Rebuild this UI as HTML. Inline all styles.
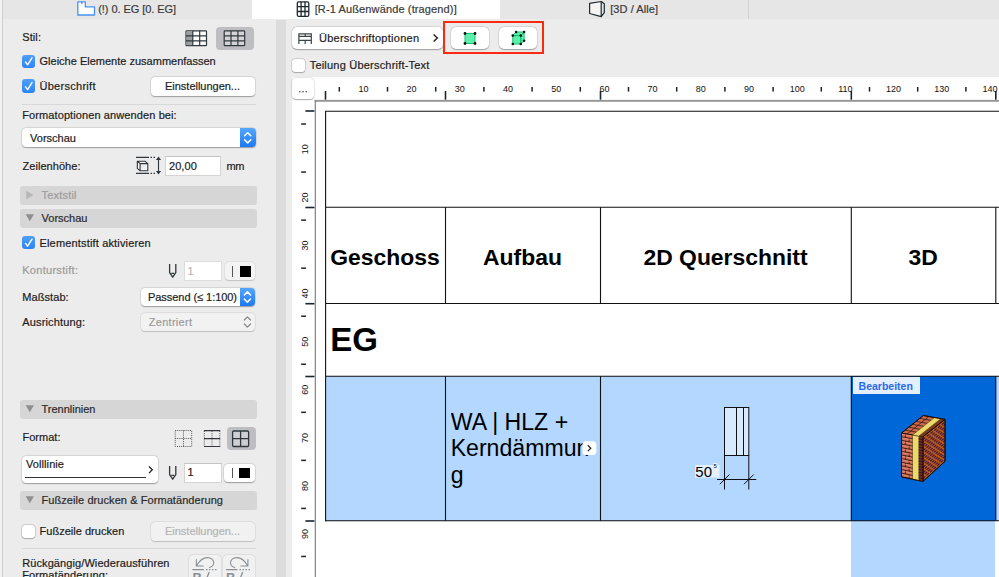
<!DOCTYPE html>
<html lang="de"><head><meta charset="utf-8"><title>Schedule</title>
<style>
html,body{margin:0;padding:0}
body{width:999px;height:577px;overflow:hidden;position:relative;background:#ececec;font-family:"Liberation Sans",sans-serif;font-size:11px;color:#1c1c1c}
.a{position:absolute}
.t{position:absolute;white-space:pre;line-height:14px;height:14px;-webkit-text-stroke:.2px}
.btn{position:absolute;background:#fff;border-radius:4px;box-shadow:0 0 0 .5px rgba(0,0,0,.10),0 .5px 1.2px rgba(0,0,0,.30);box-sizing:border-box}
.inp{position:absolute;background:#fff;border:1px solid #d4d4d4;border-top-color:#c4c4c4;box-sizing:border-box}
.bar{position:absolute;left:20px;width:237px;height:18.8px;background:#d6d6d6;border-radius:3px}
.cb{position:absolute;width:13.2px;height:13.2px;border-radius:3px;background:linear-gradient(#4f9ff9,#2d84f5)}
.cb0{position:absolute;width:13px;height:13px;border-radius:3px;background:#fff;box-shadow:0 0 0 .5px rgba(0,0,0,.22),0 .5px 1px rgba(0,0,0,.2)}
.th{position:absolute;white-space:nowrap;text-align:center;font-weight:bold;font-size:22.9px;line-height:28px;height:28px;color:#000;top:242.8px}
</style></head><body>

<!-- tab bar -->
<div class="a" style="left:0;top:0;width:999px;height:19px;background:#e6e6e6"></div>
<div class="a" style="left:251.7px;top:0;width:248.8px;height:19px;background:#fff"></div>
<div class="a" style="left:748px;top:0;width:1px;height:19px;background:#d2d2d2"></div>
<!-- left edge -->
<div class="a" style="left:0;top:0;width:2px;height:577px;background:#f2f2f2"></div>
<div class="a" style="left:1.5px;top:0;width:1.5px;height:577px;background:#d0d0d0"></div>
<!-- divider -->
<div class="a" style="left:276px;top:19.5px;width:10px;height:558px;background:#dcdcdc"></div>

<!-- LEFT PANEL shapes -->
<div class="a" style="left:215.5px;top:27px;width:38px;height:22.5px;background:#bebec2;border-radius:4px"></div>
<div class="cb" style="left:22.2px;top:54.6px"></div>
<div class="cb" style="left:22.2px;top:79.4px"></div>
<div class="btn" style="left:151px;top:77px;width:104px;height:19px"></div>
<div class="a" style="left:22px;top:104px;width:234px;height:1px;background:#d8d8d8"></div>
<div class="btn" style="left:22px;top:128.3px;width:234px;height:18.7px"></div>
<div class="a" style="left:239.5px;top:128.3px;width:16.5px;height:18.7px;border-radius:0 4px 4px 0;background:linear-gradient(#56a8fb,#1a78f3)"></div>
<div class="inp" style="left:165px;top:155.5px;width:56px;height:20.5px"></div>

<div class="bar" style="top:186px"></div>
<div class="bar" style="top:209px"></div>
<div class="cb" style="left:22.2px;top:236px"></div>
<div class="inp" style="left:184px;top:260.5px;width:37.5px;height:20.5px;border-color:#dcdcdc"></div>
<div class="btn" style="left:224.500px;top:262px;width:30.500px;height:18px;background:#f3f3f3;box-shadow:0 0 0 .5px rgba(0,0,0,.08),0 .5px 1px rgba(0,0,0,.14)"></div>
<div class="a" style="left:232px;top:266px;width:1.2px;height:10.5px;background:#555"></div>
<div class="a" style="left:240px;top:266px;width:11px;height:11px;background:#000"></div>
<div class="btn" style="left:140.5px;top:287.5px;width:114.5px;height:18.5px"></div>
<div class="a" style="left:239.5px;top:287.5px;width:15.5px;height:18.5px;border-radius:0 4px 4px 0;background:linear-gradient(#56a8fb,#1a78f3)"></div>
<div class="btn" style="left:140.5px;top:312.5px;width:114.5px;height:18.5px;background:#f2f2f2;box-shadow:0 0 0 .5px rgba(0,0,0,.08),0 .5px 1px rgba(0,0,0,.16)"></div>

<div class="bar" style="top:400px"></div>
<div class="a" style="left:227px;top:427px;width:28.5px;height:23px;background:#bebec2;border-radius:4px"></div>
<div class="btn" style="left:22px;top:455.5px;width:135.5px;height:27.5px"></div>
<div class="a" style="left:25px;top:477px;width:121px;height:1.2px;background:#333"></div>
<div class="inp" style="left:184px;top:462.5px;width:37.5px;height:20.3px"></div>
<div class="btn" style="left:223.5px;top:463.7px;width:31px;height:18px"></div>
<div class="a" style="left:232px;top:467.6px;width:1.2px;height:10.5px;background:#555"></div>
<div class="a" style="left:239.2px;top:467.6px;width:11px;height:10.6px;background:#000"></div>
<div class="bar" style="top:491px"></div>
<div class="cb0" style="left:22.3px;top:524.6px"></div>
<div class="btn" style="left:151px;top:522.3px;width:104px;height:18.7px;background:#f1f1f1;box-shadow:0 0 0 .5px rgba(0,0,0,.08),0 .5px 1px rgba(0,0,0,.16)"></div>
<div class="a" style="left:22px;top:548px;width:234px;height:1px;background:#d8d8d8"></div>
<div class="btn" style="left:189px;top:555px;width:32px;height:30px;background:#f1f1f1;box-shadow:0 0 0 .5px rgba(0,0,0,.08),0 .5px 1px rgba(0,0,0,.16)"></div>
<div class="btn" style="left:223px;top:555px;width:31.5px;height:30px;background:#f1f1f1;box-shadow:0 0 0 .5px rgba(0,0,0,.08),0 .5px 1px rgba(0,0,0,.16)"></div>

<!-- RIGHT PANEL shapes -->
<div class="btn" style="left:292px;top:27px;width:150.5px;height:22.3px;border-radius:5px"></div>
<div class="a" style="left:442.8px;top:21.3px;width:101.2px;height:33px;border:2.1px solid #fb2a10;box-sizing:border-box"></div>
<div class="btn" style="left:450.6px;top:26.8px;width:38px;height:22.3px;border-radius:5px"></div>
<div class="btn" style="left:498.5px;top:26.8px;width:38px;height:22.3px;border-radius:5px"></div>
<div class="cb0" style="left:292.3px;top:58.5px"></div>

<!-- rulers bg -->
<div class="a" style="left:292px;top:77px;width:707px;height:23.5px;background:#fff"></div>
<div class="a" style="left:292px;top:100px;width:23.5px;height:477px;background:#fff"></div>
<div class="btn" style="left:292px;top:77.700px;width:22.100px;height:21.800px;border-radius:4px"></div>
<!-- sheet -->
<div class="a" style="left:314.700px;top:99.900px;width:685px;height:477px;background:#fff;"></div>
<svg class="a" style="left:0;top:0" width="999" height="577" viewBox="0 0 999 577"><rect x="314.700" y="99.900" width="685" height="1.900" fill="#979797"/><rect x="314.700" y="99.900" width="1.300" height="478" fill="#8a8a8a"/></svg>

<!-- table fills -->
<div class="a" style="left:325.500px;top:376.300px;width:674px;height:144.500px;background:#b3d7ff"></div>
<div class="a" style="left:851px;top:376.300px;width:144.800px;height:144.500px;background:#0067d9"></div>
<div class="a" style="left:850.800px;top:520.800px;width:144.600px;height:57px;background:#b3d7ff"></div>

<svg class="a" style="left:0;top:0" width="999" height="577" viewBox="0 0 999 577">
<g fill="#1a252d">
<rect x="338.55" y="87" width="1.5" height="4.6"/>
<rect x="386.75" y="87" width="1.5" height="4.6"/>
<rect x="434.95" y="87" width="1.5" height="4.6"/>
<rect x="483.15" y="87" width="1.5" height="4.6"/>
<rect x="531.35" y="87" width="1.5" height="4.6"/>
<rect x="579.55" y="87" width="1.5" height="4.6"/>
<rect x="627.75" y="87" width="1.5" height="4.6"/>
<rect x="675.95" y="87" width="1.5" height="4.6"/>
<rect x="724.15" y="87" width="1.5" height="4.6"/>
<rect x="772.35" y="87" width="1.5" height="4.6"/>
<rect x="820.55" y="87" width="1.5" height="4.6"/>
<rect x="868.75" y="87" width="1.5" height="4.6"/>
<rect x="916.95" y="87" width="1.5" height="4.6"/>
<rect x="965.15" y="87" width="1.5" height="4.6"/>
<rect x="1013.35" y="87" width="1.5" height="4.6"/>
<rect x="324.70" y="91" width="1.6" height="8.7"/>
<rect x="444.70" y="91" width="1.6" height="8.7"/>
<rect x="599.70" y="91" width="1.6" height="8.7"/>
<rect x="850.50" y="91" width="1.6" height="8.7"/>
<rect x="995.00" y="91" width="1.6" height="8.7"/>
<rect x="301.2" y="123.28" width="4.8" height="1.5"/>
<rect x="301.2" y="171.32" width="4.8" height="1.5"/>
<rect x="301.2" y="219.38" width="4.8" height="1.5"/>
<rect x="301.2" y="267.42" width="4.8" height="1.5"/>
<rect x="301.2" y="315.48" width="4.8" height="1.5"/>
<rect x="301.2" y="363.52" width="4.8" height="1.5"/>
<rect x="301.2" y="411.57" width="4.8" height="1.5"/>
<rect x="301.2" y="459.62" width="4.8" height="1.5"/>
<rect x="301.2" y="507.67" width="4.8" height="1.5"/>
<rect x="301.2" y="555.72" width="4.8" height="1.5"/>
<rect x="301.2" y="603.77" width="4.8" height="1.5"/>
<rect x="305.4" y="110.20" width="9" height="1.6"/>
<rect x="305.4" y="206.70" width="9" height="1.6"/>
<rect x="305.4" y="302.90" width="9" height="1.6"/>
<rect x="305.4" y="375.70" width="9" height="1.6"/>
<rect x="305.4" y="520.20" width="9" height="1.6"/>
</g>
<g font-family="Liberation Sans, sans-serif" font-size="9" fill="#111" text-anchor="middle">
<text x="363.40" y="92.2">10</text>
<text x="411.60" y="92.2">20</text>
<text x="459.80" y="92.2">30</text>
<text x="508.00" y="92.2">40</text>
<text x="556.20" y="92.2">50</text>
<text x="604.40" y="92.2">60</text>
<text x="652.60" y="92.2">70</text>
<text x="700.80" y="92.2">80</text>
<text x="749.00" y="92.2">90</text>
<text x="797.20" y="92.2">100</text>
<text x="845.40" y="92.2">110</text>
<text x="893.60" y="92.2">120</text>
<text x="941.80" y="92.2">130</text>
<text x="990.00" y="92.2">140</text>
<text transform="translate(307.5 149.30) rotate(-90)">10</text>
<text transform="translate(307.5 197.40) rotate(-90)">20</text>
<text transform="translate(307.5 245.50) rotate(-90)">30</text>
<text transform="translate(307.5 293.60) rotate(-90)">40</text>
<text transform="translate(307.5 341.70) rotate(-90)">50</text>
<text transform="translate(307.5 389.80) rotate(-90)">60</text>
<text transform="translate(307.5 437.90) rotate(-90)">70</text>
<text transform="translate(307.5 486.00) rotate(-90)">80</text>
<text transform="translate(307.5 534.10) rotate(-90)">90</text>
</g></svg>

<svg class="a" style="left:0;top:0" width="999" height="577" viewBox="0 0 999 577">
<g stroke="#111" stroke-width="1.1" fill="none">
<path d="M325.600 111.300H999M325.600 207.200H999M325.600 303.500H999M325.600 376.300H999M325.600 520.800H999M325.600 110.700V521.400"/>
<path d="M445.500 207.200V303.500M600.500 207.200V303.500M851.300 207.200V303.500M995.800 207.200V303.500"/>
<path d="M445.500 376.300V520.800M600.500 376.300V520.800M851.300 376.300V520.800M995.800 376.300V520.800"/>
</g>
<!-- ICONS -->
<!-- checkmarks -->
<g fill="none" stroke="#fff" stroke-width="1.4" stroke-linecap="round" stroke-linejoin="round">
<path d="M25.5 62l2.1 2.8 4.4-7"/>
<path d="M25.5 86.8l2.1 2.8 4.4-7"/>
<path d="M25.5 243.4l2.1 2.8 4.4-7"/>
</g>
<!-- select chevrons -->
<g fill="none" stroke="#fff" stroke-width="1.5" stroke-linecap="round" stroke-linejoin="round">
<path d="M244.6 135.8l3.1-3.1 3.1 3.1M244.6 139.8l3.1 3.1 3.1-3.1"/>
<path d="M244.3 295l3.1-3.1 3.1 3.1M244.3 299l3.1 3.1 3.1-3.1"/>
</g>
<path d="M244.3 320l3.1-3.1 3.1 3.1M244.3 324l3.1 3.1 3.1-3.1" fill="none" stroke="#8a8a8a" stroke-width="1.3" stroke-linecap="round" stroke-linejoin="round"/>
<!-- disclosure triangles -->
<path d="M26.3 190.7v8.6l7-4.3z" fill="#b6b6b6"/>
<path d="M25.7 214.3h8.2l-4.1 7z" fill="#8e8e8e"/>
<path d="M25.7 405.3h8.2l-4.1 7z" fill="#8e8e8e"/>
<path d="M25.7 496.3h8.2l-4.1 7z" fill="#8e8e8e"/>
<!-- chevrons > -->
<path d="M433.6 34.6l3.8 3.5-3.8 3.5" fill="none" stroke="#222" stroke-width="1.4"/>
<path d="M149 466.500l3.300 3.300-3.300 3.300" fill="none" stroke="#222" stroke-width="1.3"/>
<!-- style icons -->
<g>
<rect x="186" y="30.900" width="20.500" height="14.800" rx="0.800" fill="#fff" stroke="#30383d" stroke-width="1.2"/>
<rect x="186.6" y="31.4" width="6.2" height="13.8" fill="#9a9ea0"/>
<path d="M192.8 30.8v15M199.7 30.8v15M186 35.8h20.5M186 40.8h20.5" stroke="#30383d" stroke-width="1.2" fill="none"/>
<rect x="224.200" y="30.900" width="20.500" height="14.800" rx="0.800" fill="#d4d4d6" stroke="#30383d" stroke-width="1.2"/>
<path d="M231 30.8v15M237.9 30.8v15M224.2 35.8h20.5M224.2 40.8h20.5" stroke="#30383d" stroke-width="1.2" fill="none"/>
</g>
<!-- row height icon -->
<g fill="none" stroke="#30383d" stroke-width="1.1">
<path d="M136 157.4h13M136 173.4h13"/>
<path d="M150.5 157.4h5M150.5 173.4h5" stroke-dasharray="1.5 1.5"/>
<path d="M158.5 158.5v14"/>
<path d="M137.3 161.2l2.8 2.4v7.2l-2.8-2.4zM137.3 161.2h7.6l2.9 2.4h-7.7M147.8 163.6v7.2h-7.7" stroke-linejoin="round" fill="#f4f4f4"/>
</g>
<path d="M158.5 156.6l2.6 3.4h-5.2zM158.5 174.4l2.6-3.4h-5.2z" fill="#30383d"/>
<!-- pens -->
<g fill="none" stroke="#30383d" stroke-width="1.300" stroke-linejoin="round">
<path d="M169.6 264v8.6l3.1 4.6 3.1-4.6V264M171.3 273.3h2.8"/>
<path d="M169.6 466v8.6l3.1 4.6 3.1-4.6V466M171.3 475.3h2.8"/>
</g>
<!-- separator icons -->
<g fill="none" stroke="#555" stroke-width="1" stroke-dasharray="1 1.1">
<path d="M175.2 430.5h16.5v16h-16.5zM183.5 430.5v16M175.2 438.5h16.5"/>
<path d="M204.3 431v15.5M212 431v15.5M219.8 431v15.5"/>
</g>
<path d="M204 430.7h16.2M204 438.6h16.2M204 446.5h16.2" stroke="#30383d" stroke-width="1.2" fill="none"/>
<rect x="232.6" y="431" width="16" height="15.5" rx="1.2" fill="#cfcfd2" stroke="#30383d" stroke-width="1.3"/>
<path d="M240.6 431v15.5M232.6 438.7h16" stroke="#30383d" stroke-width="1.3" fill="none"/>
<!-- undo/redo -->
<g fill="none" stroke="#8a9095" stroke-width="1.1" stroke-linecap="round" stroke-linejoin="round">
<path d="M196.6 565.8c2.5-4.5 7-9 12.500-8 5.500 1.500 6.500 7.500 0.500 9.800M196.300 559.500v6.500h7"/>
<path d="M247.600 565.800c-2.500-4.500-7-9-12.500-8-5.500 1.500-6.500 7.500-0.500 9.800M247.900 559.500v6.500h-7"/>
<path d="M192.400 569.700h11.500M226 569.700h11.500" stroke-width="1.300" stroke-linecap="butt"/>
<path d="M206 569.700h11M239.500 569.700h11" stroke-width="1.300" stroke-dasharray="1.500 1.500" stroke-linecap="butt"/>
</g>
<g font-family="Liberation Sans, sans-serif" font-weight="bold" font-size="13" fill="#8a9095">
<text x="192.500" y="581.500">B</text><text x="226" y="581.500">B</text>
</g>
<path d="M205.500 581.500l3.700-9.500M239 581.500l3.700-9.500" stroke="#8a9095" stroke-width="1.300" fill="none"/>
<!-- tab icons -->
<path d="M77.800 1.800h7.500v5h9.200v8.200h-16.700z" fill="#fff" stroke="#4a90f5" stroke-width="1.300" stroke-linejoin="round"/>
<path d="M81.800 1.800v2.500" stroke="#4a90f5" stroke-width="1.200" fill="none"/>
<rect x="297.300" y="1.800" width="11.500" height="14.600" rx="1.500" fill="#fff" stroke="#1e2a33" stroke-width="1.300"/>
<path d="M301.100 1.800v14.600M305 1.800v14.600M297.300 6.700h11.500M297.300 11.500h11.500" stroke="#1e2a33" stroke-width="1.300" fill="none"/>
<path d="M589.600 3.300l11.600-1.800v15.200l-11.600-3.200z" fill="#f4f4f4" stroke="#1e2a33" stroke-width="1.200" stroke-linejoin="round"/><path d="M601.200 1.500l3.100 2.200v8.900l-3.100 4.100" fill="none" stroke="#1e2a33" stroke-width="1.200" stroke-linejoin="round"/>
<!-- header options icon -->
<path d="M298.900 43.900V33.800H311.300V43.900M298.900 36.300H311.300M298.900 40.400H311.300M305.200 33.800V36.300M305.200 40.400V43.900" fill="none" stroke="#3a4449" stroke-width="1.200"/>
<!-- green icons -->
<rect x="465" y="33.500" width="10" height="10" fill="#5cefae" stroke="#19c06c" stroke-width="1"/>
<g fill="#111"><circle cx="465" cy="33.500" r="1.400"/><circle cx="475" cy="33.500" r="1.400"/><circle cx="465" cy="43.500" r="1.400"/><circle cx="475" cy="43.500" r="1.400"/></g>
<g fill="#5cefae" stroke="#19c06c" stroke-width="1" stroke-linejoin="round">
<path d="M512.800 35.600l3.300-3.600h8l-3.300 3.600zM520.800 35.600l3.300-3.600v8.800l-3.300 3.200zM512.800 35.600h8v8.400h-8z"/>
</g>
<g fill="#111"><circle cx="512.800" cy="35.600" r="1.300"/><circle cx="520.800" cy="35.600" r="1.300"/><circle cx="512.800" cy="44" r="1.300"/><circle cx="520.800" cy="44" r="1.300"/><circle cx="516.100" cy="32" r="1.300"/><circle cx="524.100" cy="32" r="1.300"/><circle cx="524.100" cy="40.800" r="1.300"/></g>
<!-- ... -->
<g fill="#333"><circle cx="299.800" cy="91.800" r="0.750"/><circle cx="303" cy="91.800" r="0.750"/><circle cx="306.200" cy="91.800" r="0.750"/></g>

<!-- section drawing -->
<rect x="724.500" y="407.500" width="24.300" height="48" fill="#d8eaff" stroke="#111" stroke-width="1"/>
<path d="M736.500 407.500v48M743.500 407.500v48" stroke="#111" stroke-width="1" fill="none"/>
<path d="M724.500 455.500v34M748.800 455.500v34M717 479.500h39.300M719.800 484.200l9.600-9.600M744 484.200l9.600-9.600" stroke="#111" stroke-width="1" fill="none"/>
<rect x="695" y="465" width="24.500" height="12.500" fill="#e6f1ff"/>
<text x="695.300" y="477" font-family="Liberation Sans, sans-serif" font-size="15" fill="#000">50</text>
<rect x="713" y="463" width="4.500" height="5" fill="#e6f1ff"/><text x="713.500" y="468" font-family="Liberation Sans, sans-serif" font-size="6" fill="#000">5</text>


<!-- brick wall -->
<g stroke-linejoin="round">
<path d="M901.5 433.1L923.3 415.5L945.0 419.4L922.9 436.8z" fill="#c96a4c" stroke="#1a0d08" stroke-width="0.9"/>
<path d="M918.8 436.1L940.8 418.7L945.0 419.4L922.9 436.8z" fill="#7a3a1c"/>
<path d="M922.9 436.8L945.0 419.4L945.0 461.3L922.9 481.4z" fill="#bb5c1a" stroke="#1a0d08" stroke-width="0.9"/>
<path d="M901.5 433.1L922.9 436.8L922.9 481.4L901.5 476.9z" fill="#cf6e54" stroke="#1a0d08" stroke-width="0.9"/>
<path d="M918.8 436.1L922.9 436.8L922.9 481.4L918.8 480.5z" fill="#6e3420"/>
<path d="M912.5 435.0L918.8 436.1L918.8 480.5L912.5 479.2z" fill="#ecd96c" stroke="#3a3010" stroke-width="0.5"/>
<path d="M912.5 435.0L934.5 417.5L940.8 418.7L918.8 436.1z" fill="#ecd96c" stroke="#3a3010" stroke-width="0.5"/>
<path d="M901.5 436.8L912.5 438.7M901.5 440.4L912.5 442.4M901.5 444.1L912.5 446.1M901.5 447.7L912.5 449.7M901.5 451.4L912.5 453.4M901.5 455.0L912.5 457.1M901.5 458.6L912.5 460.8M901.5 462.3L912.5 464.5M901.5 465.9L912.5 468.2M901.5 469.6L912.5 471.8M901.5 473.2L912.5 475.5M905.4 433.8L905.4 437.4M909.2 438.1L909.2 441.8M905.4 441.1L905.4 444.8M909.2 445.5L909.2 449.1M905.4 448.4L905.4 452.1M909.2 452.8L909.2 456.5M905.4 455.7L905.4 459.4M909.2 460.1L909.2 463.8M905.4 463.1L905.4 466.7M909.2 467.5L909.2 471.2M905.4 470.4L905.4 474.0M909.2 474.8L909.2 478.5" stroke="#2a0f08" stroke-width="0.8" fill="none"/>
<path d="M902.6 434.6L911.4 436.1M902.6 438.2L911.4 439.8M902.6 441.9L911.4 443.5M902.6 445.5L911.4 447.1M902.6 449.2L911.4 450.8M902.6 452.8L911.4 454.5M902.6 456.5L911.4 458.2M902.6 460.1L911.4 461.9M902.6 463.8L911.4 465.5M902.6 467.4L911.4 469.2M902.6 471.1L911.4 472.9M902.6 474.8L911.4 476.6" stroke="#e89a84" stroke-width="0.6" fill="none"/>
<path d="M905.1 430.2L916.2 432.1M908.8 427.2L919.8 429.2M912.4 424.3L923.5 426.3M916.0 421.4L927.1 423.3M919.7 418.4L930.8 420.4M907.0 434.1L928.9 416.5" stroke="#2a0f08" stroke-width="0.7" fill="none"/>
<g stroke="#47183c" stroke-width="1.25" fill="none" stroke-dasharray="3.3 1.5"><path d="M922.9 439.6L945.0 422.0" stroke-dashoffset="0"/><path d="M922.9 442.4L945.0 424.6" stroke-dashoffset="2.4"/><path d="M922.9 445.2L945.0 427.3" stroke-dashoffset="0"/><path d="M922.9 447.9L945.0 429.9" stroke-dashoffset="2.4"/><path d="M922.9 450.7L945.0 432.5" stroke-dashoffset="0"/><path d="M922.9 453.5L945.0 435.1" stroke-dashoffset="2.4"/><path d="M922.9 456.3L945.0 437.7" stroke-dashoffset="0"/><path d="M922.9 459.1L945.0 440.4" stroke-dashoffset="2.4"/><path d="M922.9 461.9L945.0 443.0" stroke-dashoffset="0"/><path d="M922.9 464.7L945.0 445.6" stroke-dashoffset="2.4"/><path d="M922.9 467.5L945.0 448.2" stroke-dashoffset="0"/><path d="M922.9 470.2L945.0 450.8" stroke-dashoffset="2.4"/><path d="M922.9 473.0L945.0 453.4" stroke-dashoffset="0"/><path d="M922.9 475.8L945.0 456.1" stroke-dashoffset="2.4"/><path d="M922.9 478.6L945.0 458.7" stroke-dashoffset="0"/></g>
<path d="M918.8 438.9L922.9 439.6M918.8 441.6L922.9 442.4M918.8 444.4L922.9 445.2M918.8 447.2L922.9 447.9M918.8 450.0L922.9 450.7M918.8 452.8L922.9 453.5M918.8 455.5L922.9 456.3M918.8 458.3L922.9 459.1M918.8 461.1L922.9 461.9M918.8 463.9L922.9 464.7M918.8 466.6L922.9 467.5M918.8 469.4L922.9 470.2M918.8 472.2L922.9 473.0M918.8 475.0L922.9 475.8M918.8 477.8L922.9 478.6" stroke="#3a1230" stroke-width="1.1" fill="none"/>
<path d="M901.5 433.1L923.3 415.5L945.0 419.4L945.0 461.3L922.9 481.4L901.5 476.9z" fill="none" stroke="#140a06" stroke-width="0.9"/>
<path d="M922.9 436.8L922.9 481.4M922.9 436.8L945 419.4" fill="none" stroke="#140a06" stroke-width="0.8"/>
</g>
</svg>

<span class="th" style="left:325px;width:120px">Geschoss</span>
<span class="th" style="left:445px;width:155px">Aufbau</span>
<span class="th" style="left:600px;width:251px">2D Querschnitt</span>
<span class="th" style="left:851px;width:144.500px">3D</span>
<span class="t" style="left:330.200px;top:320.200px;-webkit-text-stroke:0;font-size:33px;font-weight:bold;line-height:40px;height:40px;color:#000">EG</span>
<div class="a" style="left:450.7px;top:408.5px;width:140px;font-size:23.1px;line-height:26.7px;color:#000;white-space:nowrap;overflow:hidden">WA | HLZ +<br>Kerndämmun<br>g</div>
<svg class="a" style="left:582px;top:441px" width="15" height="15" viewBox="582 441 15 15"><rect x="582.500" y="441.300" width="13.800" height="13.800" rx="3.500" fill="#fff"/><path d="M587.800 445.300l3 2.900-3 2.900" fill="none" stroke="#222" stroke-width="1.200"/></svg>
<div class="a" style="left:852.500px;top:377.300px;width:67.700px;height:16.500px;background:#e3eeff"></div>
<span class="t" style="left:858.600px;top:379px;font-weight:bold;font-size:10.500px;-webkit-text-stroke:0;color:#2a6ae8">Bearbeiten</span>

<span class="t" style="left:98.20px;top:1.79px;color:#3a3a3a;letter-spacing:-0.054px;">(!) 0. EG [0. EG]</span>
<span class="t" style="left:314.70px;top:1.79px;color:#3a3a3a;letter-spacing:0.128px;">[R-1 Außenwände (tragend)]</span>
<span class="t" style="left:610.20px;top:1.79px;color:#3a3a3a;letter-spacing:0.072px;">[3D / Alle]</span>
<span class="t" style="left:22.20px;top:30.19px;color:#1c1c1c;letter-spacing:0.102px;">Stil:</span>
<span class="t" style="left:39.50px;top:54.19px;color:#1c1c1c;letter-spacing:0.005px;">Gleiche Elemente zusammenfassen</span>
<span class="t" style="left:39.50px;top:79.19px;color:#1c1c1c;letter-spacing:0.281px;">Überschrift</span>
<span class="t" style="left:165.00px;top:79.19px;color:#1c1c1c;letter-spacing:-0.015px;">Einstellungen...</span>
<span class="t" style="left:22.20px;top:108.19px;color:#1c1c1c;letter-spacing:0.105px;">Formatoptionen anwenden bei:</span>
<span class="t" style="left:30.00px;top:131.19px;color:#1c1c1c;letter-spacing:0.018px;">Vorschau</span>
<span class="t" style="left:22.50px;top:158.69px;color:#1c1c1c;letter-spacing:0.050px;">Zeilenhöhe:</span>
<span class="t" style="left:169.00px;top:158.69px;color:#1c1c1c;letter-spacing:0.055px;">20,00</span>
<span class="t" style="left:226.50px;top:158.69px;color:#1c1c1c;letter-spacing:-0.328px;">mm</span>
<span class="t" style="left:41.50px;top:188.19px;color:#9c9c9c;letter-spacing:0.196px;">Textstil</span>
<span class="t" style="left:41.50px;top:211.19px;color:#2a2a2a;letter-spacing:0.018px;">Vorschau</span>
<span class="t" style="left:39.50px;top:235.94px;color:#1c1c1c;letter-spacing:0.165px;">Elementstift aktivieren</span>
<span class="t" style="left:22.20px;top:263.49px;color:#9a9a9a;letter-spacing:0.293px;">Konturstift:</span>
<span class="t" style="left:187.60px;top:263.69px;color:#b8b8b8;letter-spacing:0.000px;">1</span>
<span class="t" style="left:22.20px;top:290.19px;color:#1c1c1c;letter-spacing:0.092px;">Maßstab:</span>
<span class="t" style="left:148.00px;top:289.89px;color:#1c1c1c;letter-spacing:-0.051px;">Passend (≤ 1:100)</span>
<span class="t" style="left:22.20px;top:315.19px;color:#1c1c1c;letter-spacing:0.168px;">Ausrichtung:</span>
<span class="t" style="left:148.75px;top:314.89px;color:#9c9c9c;letter-spacing:0.285px;">Zentriert</span>
<span class="t" style="left:41.50px;top:402.44px;color:#2a2a2a;letter-spacing:-0.002px;">Trennlinien</span>
<span class="t" style="left:22.50px;top:429.94px;color:#1c1c1c;letter-spacing:0.016px;">Format:</span>
<span class="t" style="left:26.00px;top:456.69px;color:#1c1c1c;letter-spacing:0.086px;">Volllinie</span>
<span class="t" style="left:187.60px;top:465.44px;color:#1c1c1c;letter-spacing:0.000px;">1</span>
<span class="t" style="left:41.50px;top:493.44px;color:#2a2a2a;letter-spacing:0.073px;">Fußzeile drucken &amp; Formatänderung</span>
<span class="t" style="left:39.50px;top:524.19px;color:#1c1c1c;letter-spacing:0.025px;">Fußzeile drucken</span>
<span class="t" style="left:165.00px;top:524.19px;color:#b4b4b4;letter-spacing:-0.015px;">Einstellungen...</span>
<span class="t" style="left:22.20px;top:555.94px;color:#1c1c1c;letter-spacing:0.095px;">Rückgängig/Wiederausführen</span>
<span class="t" style="left:22.20px;top:567.69px;color:#1c1c1c;letter-spacing:0.101px;">Formatänderung:</span>
<span class="t" style="left:319.00px;top:31.19px;color:#1c1c1c;letter-spacing:0.256px;">Überschriftoptionen</span>
<span class="t" style="left:309.70px;top:58.19px;color:#1c1c1c;letter-spacing:0.207px;">Teilung Überschrift-Text</span>
</body></html>
